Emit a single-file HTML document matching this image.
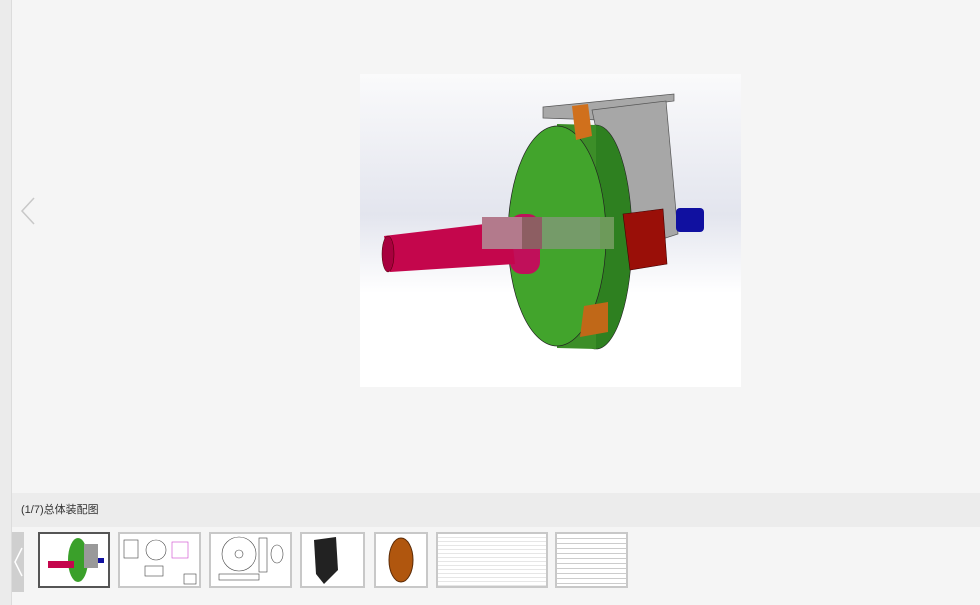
<!DOCTYPE html>
<html><head><meta charset="utf-8"><style>
body{margin:0;width:980px;height:605px;background:#f5f5f5;position:relative;overflow:hidden;font-family:"Liberation Sans","Noto Sans CJK SC",sans-serif}
.lb{position:absolute;left:0;top:0;width:11px;height:605px;background:#ebebeb;border-right:1px solid #dcdcdc}
.main{position:absolute;left:360px;top:74px;width:381px;height:313px;background:linear-gradient(#fafafb 0%,#e3e5ee 45%,#fff 70%,#fff 100%)}
.cap{position:absolute;left:12px;top:493px;width:968px;height:34px;background:#ececec;font-size:11px;color:#333;line-height:34px;padding-left:9px;box-sizing:border-box}
.strip{position:absolute;left:12px;top:527px;width:968px;height:68px;background:#f5f5f5}
.arr{position:absolute;left:12px;top:532px;width:12px;height:60px;background:#cfcfcf}
.t{position:absolute;top:532px;height:56px;border:2px solid #c8c8c8;background:#fff;box-sizing:border-box}
</style></head><body>
<div class="lb"></div>
<svg style="position:absolute;left:18px;top:196px" width="20" height="30"><path d="M16 2 L4 15 L16 28" stroke="#c8c8c8" stroke-width="1.5" fill="none"/></svg>
<div class="main">
<svg width="381" height="313" viewBox="0 0 381 313">
<polygon points="183,33 314,20 314,27 240,37 240,46 183,44" fill="#a8a8a8" stroke="#555" stroke-width="0.7"/>
<polygon points="232,36 306,27 318,160 262,178" fill="#a7a7a7" stroke="#555" stroke-width="0.7"/>
<rect x="316" y="134" width="28" height="24" rx="4" fill="#1010a0"/>
<ellipse cx="236" cy="163" rx="36" ry="112" fill="#2e8020" stroke="#222" stroke-width="0.6"/>
<path d="M197,50 L236,51 L236,275 L197,274 Z" fill="#3c8e28"/>
<ellipse cx="197" cy="162" rx="49" ry="110" fill="#42a42c" stroke="#222" stroke-width="0.7"/>
<polygon points="212,32 228,30 232,62 216,66" fill="#d0701c"/>
<polygon points="224,232 248,228 248,258 220,263" fill="#c06818"/>
<polygon points="263,140 303,135 307,190 270,196" fill="#9a0f08" stroke="#400" stroke-width="0.6"/>
<rect x="150" y="140" width="30" height="60" rx="12" fill="#c0105a"/>
<polygon points="24,162 150,147 155,190 30,198" fill="#c4064c"/>
<ellipse cx="28" cy="180" rx="6" ry="18" fill="#a8003e" stroke="#400" stroke-width="0.5"/>
<rect x="122" y="143" width="132" height="32" fill="#7b9a70" opacity="0.9"/>
<rect x="122" y="143" width="40" height="32" fill="#b37a8c"/>
<rect x="162" y="143" width="20" height="32" fill="#8d5e62"/>
<rect x="240" y="143" width="14" height="32" fill="#6d9a5a"/>
</svg></div>
<div class="cap">(1/7)总体装配图</div>
<div class="strip"></div>
<div class="arr"><svg width="12" height="60"><path d="M10 16 L3 30 L10 44" stroke="#fff" stroke-width="1.5" fill="none"/></svg></div>
<div class="t" style="left:38px;width:72px;border-color:#555"><svg width="68" height="52"><ellipse cx="38" cy="26" rx="10" ry="22" fill="#3aa02a"/><rect x="8" y="27" width="26" height="7" fill="#c4064c"/><rect x="44" y="10" width="14" height="24" fill="#999"/><rect x="58" y="24" width="6" height="5" fill="#1010a0"/></svg></div>
<div class="t" style="left:118px;width:83px"><svg width="79" height="52" stroke="#444" stroke-width="0.6" fill="none"><rect x="4" y="6" width="14" height="18"/><circle cx="36" cy="16" r="10"/><rect x="52" y="8" width="16" height="16" stroke="#c4c"/><rect x="25" y="32" width="18" height="10"/><rect x="64" y="40" width="12" height="10"/></svg></div>
<div class="t" style="left:209px;width:83px"><svg width="79" height="52" stroke="#444" stroke-width="0.6" fill="none"><circle cx="28" cy="20" r="17"/><circle cx="28" cy="20" r="4"/><rect x="48" y="4" width="8" height="34"/><ellipse cx="66" cy="20" rx="6" ry="9"/><rect x="8" y="40" width="40" height="6"/></svg></div>
<div class="t" style="left:300px;width:65px"><svg width="61" height="52"><polygon points="12,6 34,3 36,36 22,50 14,40" fill="#222"/></svg></div>
<div class="t" style="left:374px;width:54px"><svg width="50" height="52"><ellipse cx="25" cy="26" rx="12" ry="22" fill="#b0560e" stroke="#5a2a06"/></svg></div>
<div class="t" style="left:436px;width:112px;background:repeating-linear-gradient(#fff 0 3px,#e6e6e6 3px 4px)"></div>
<div class="t" style="left:555px;width:73px;background:repeating-linear-gradient(#fff 0 4px,#ccc 4px 5px)"></div>
</body></html>
